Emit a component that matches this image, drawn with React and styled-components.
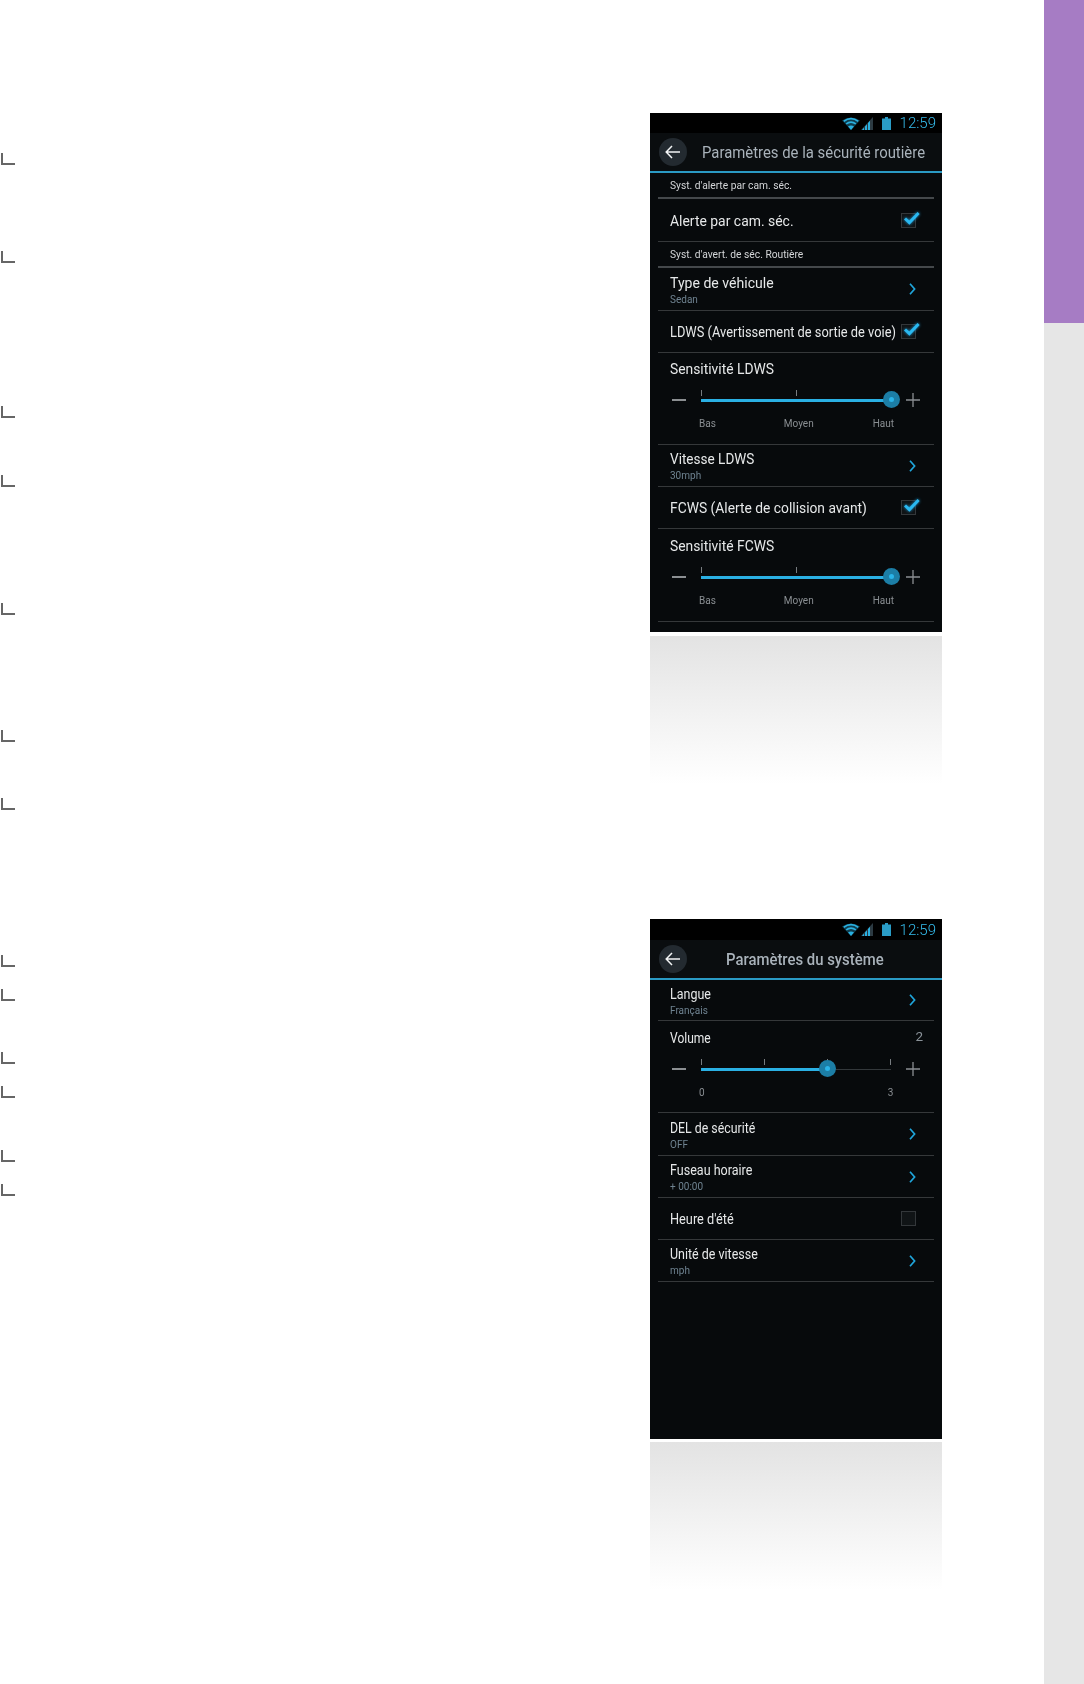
import React from "react";
import styled, { createGlobalStyle } from "styled-components";

const GlobalStyle = createGlobalStyle`
  html, body {
    margin: 0;
    padding: 0;
    background: #fff;
  }
  body {
    font-family: Roboto, "Liberation Sans", sans-serif;
  }
`;

const WifiIcon = () => (
  <svg width="18" height="13" viewBox="0 0 18 13">
    <path d="M9 13 L0 3.6 Q9 -2.4 18 3.6 Z" fill="#2ab0e0" opacity="0.35" />
    <path d="M1.8 4.2 Q9 -0.8 16.2 4.2" stroke="#2ab0e0" strokeWidth="1.7" fill="none" />
    <path d="M4.2 6.9 Q9 3.4 13.8 6.9" stroke="#2ab0e0" strokeWidth="1.7" fill="none" />
    <path d="M9 13 L6 9.4 Q9 7.4 12 9.4 Z" fill="#2ab0e0" />
  </svg>
);

const SignalIcon = () => (
  <svg width="12" height="13" viewBox="0 0 12 13">
    <path d="M0 13 L12 0 V13 Z" fill="#2c3a42" />
    <path d="M1 13 L3 10.6 V13 Z M4 13 V9.4 L6 7.2 V13 Z M7 13 V6 L9 3.8 V13 Z" fill="#2ab0e0" />
  </svg>
);

const BatteryIcon = () => (
  <svg width="9" height="13" viewBox="0 0 9 13">
    <path d="M3 0 H6 V1.5 H9 V13 H0 V1.5 H3 Z" fill="#2a9cc6" />
  </svg>
);

const BackArrow = () => (
  <svg width="16" height="14" viewBox="0 0 16 14">
    <path d="M7 1 L1.2 7 L7 13 M1.2 7 H15" stroke="#f2f4f5" strokeWidth="1.5" fill="none" />
  </svg>
);

const ChevronIcon = () => (
  <svg width="7" height="12" viewBox="0 0 7 12">
    <path d="M1 0.8 L5.6 6 L1 11.2" stroke="#1fa6dc" strokeWidth="1.7" fill="none" />
  </svg>
);

const CheckIcon = () => (
  <CheckMark width="19" height="15" viewBox="0 0 19 15">
    <path d="M3 7.5 L7.4 11.6 L16.6 2" stroke="#2ab8f0" strokeWidth="3" fill="none" />
  </CheckMark>
);

const Page = styled.div`
  display: flex;
  width: 1084px;
  min-height: 1684px;
`;

const Main = styled.main`
  flex: 1;
  display: flex;
  flex-direction: column;
  padding: 113px 102px 0 0;
  gap: 109px;
`;

const Sidebar = styled.aside`
  width: 40px;
  background: #e6e6e6;
`;

const SidebarTab = styled.div`
  height: 323px;
  background: #a67cc4;
`;

const Section = styled.section`
  display: flex;
  justify-content: space-between;
  align-items: flex-start;
`;

const Marks = styled.div`
  display: flex;
  flex-direction: column;
  align-items: flex-start;
  padding-left: 1px;
`;

const Mark = styled.span`
  box-sizing: border-box;
  width: 14px;
  height: 12px;
  margin-top: ${(p) => p.$top}px;
  border-left: 2.5px solid #666;
  border-bottom: 2px solid #666;
`;

const PhoneColumn = styled.div`
  width: 292px;
  display: flex;
  flex-direction: column;
  gap: ${(p) => p.$gap}px;
`;

const Phone = styled.div`
  height: ${(p) => p.$h}px;
  background: #070a0c;
  filter: blur(0.35px);
`;

const Fade = styled.div`
  height: 148px;
  background: linear-gradient(#e3e3e3, #ffffff);
`;

const StatusBar = styled.div`
  height: ${(p) => p.$h}px;
  background: #000;
  display: flex;
  align-items: center;
  justify-content: flex-end;
  padding-right: 6px;
`;

const StatusIcons = styled.div`
  display: flex;
  align-items: center;
  gap: 1px;
  margin-right: 9px;
`;

const BatterySlot = styled.span`
  display: flex;
  margin-left: 8px;
`;

const Clock = styled.span`
  font-size: 15px;
  font-weight: 300;
  color: #35bcec;
`;

const Header = styled.header`
  box-sizing: border-box;
  height: ${(p) => p.$h}px;
  display: flex;
  align-items: center;
  padding-left: 9px;
  border-bottom: 2px solid #2a9ac4;
  background: #0a0d0f;
`;

const BackButton = styled.div`
  flex-shrink: 0;
  width: 28px;
  height: 28px;
  border-radius: 50%;
  background: #232a30;
  display: flex;
  align-items: center;
  justify-content: center;
`;

const Title = styled.h1`
  margin: 0 0 0 ${(p) => p.$left}px;
  font-size: 16px;
  font-weight: ${(p) => p.$weight};
  color: #a9b2ba;
  white-space: nowrap;
  transform: scaleX(0.93);
  transform-origin: left center;
`;

const List = styled.div`
  margin: 0 8px;
`;

const Row = styled.div`
  box-sizing: border-box;
  height: ${(p) => p.$h}px;
  display: flex;
  align-items: center;
  justify-content: space-between;
  padding: 0 18px 0 12px;
  border-bottom: ${(p) => (p.$heading ? "2px solid #44484b" : "1.5px solid #35383a")};
`;

const RowText = styled.div`
  display: flex;
  flex-direction: column;
`;

const RowTitle = styled.span`
  min-width: 0;
  padding-top: 2px;
  font-size: 14.5px;
  line-height: 17px;
  font-weight: 400;
  color: #e6e8e9;
  white-space: nowrap;
  transform: scaleX(${(p) => p.$scale});
  transform-origin: left center;
`;

const RowSub = styled.span`
  margin-top: 1px;
  font-size: 10px;
  line-height: 13px;
  color: #6f8391;
`;

const Heading = styled.span`
  font-size: 10.25px;
  color: #d4d6d8;
  white-space: nowrap;
`;

const CheckBox = styled.div`
  position: relative;
  flex-shrink: 0;
  box-sizing: border-box;
  width: 15px;
  height: 15px;
  border: 1.5px solid #33373a;
  background: #101416;
`;

const CheckMark = styled.svg`
  position: absolute;
  left: -0.5px;
  top: -3px;
  filter: drop-shadow(0 0 1.5px #1f9cd6);
`;

const SliderRow = styled.div`
  box-sizing: border-box;
  height: ${(p) => p.$h}px;
  padding: ${(p) => p.$top}px 0 0 12px;
  border-bottom: 1.5px solid #35383a;
`;

const SliderHead = styled.div`
  display: flex;
  justify-content: space-between;
  padding-right: 11px;
`;

const VolumeValue = styled.span`
  font-size: 13.5px;
  line-height: 17px;
  color: #8a9299;
`;

const SliderLine = styled.div`
  display: flex;
  align-items: center;
  height: 20px;
  margin-top: 12px;
`;

const Minus = styled.span`
  width: 14px;
  height: 1.5px;
  margin: 0 15px 0 2px;
  background: #8b8f92;
`;

const Plus = styled.svg`
  margin-left: 15px;
`;

const Track = styled.div`
  position: relative;
  width: 190px;
  height: 1px;
  background: #33383b;
`;

const TrackFill = styled.div`
  position: absolute;
  left: 0;
  top: -1px;
  height: 3px;
  background: #2ab0e4;
`;

const Tick = styled.span`
  position: absolute;
  top: -10px;
  width: 1px;
  height: 6px;
  background: #777c80;
`;

const Thumb = styled.span`
  position: absolute;
  top: -8.5px;
  width: 17px;
  height: 17px;
  margin-left: -8.5px;
  border-radius: 50%;
  background: #1c7ea6;
  display: flex;
  align-items: center;
  justify-content: center;
  &::after {
    content: "";
    width: 5px;
    height: 5px;
    border-radius: 50%;
    background: #2ab4e8;
  }
`;

const ScaleLabels = styled.div`
  display: flex;
  margin: 8px 0 0 29px;
  font-size: 10px;
  line-height: 12px;
  color: #8a8f93;
`;

const ScaleLabel = styled.span`
  margin-left: ${(p) => p.$gap}px;
`;

const Slider = ({ title, titleScale, value, ticks, labels, height, top, side }) => (
  <SliderRow $h={height} $top={top}>
    <SliderHead>
      <RowTitle $scale={titleScale}>{title}</RowTitle>
      {side && <VolumeValue>{side}</VolumeValue>}
    </SliderHead>
    <SliderLine>
      <Minus />
      <Track>
        <TrackFill style={{ width: `${value}%` }} />
        {ticks.map((t) => (
          <Tick key={t} style={{ left: `${t}%` }} />
        ))}
        <Thumb style={{ left: `${value}%` }} />
      </Track>
      <Plus width="14" height="14" viewBox="0 0 14 14">
        <path d="M7 0 V14 M0 7 H14" stroke="#8b8f92" strokeWidth="1.3" />
      </Plus>
    </SliderLine>
    <ScaleLabels>
      {labels.map((l) => (
        <ScaleLabel key={l.text} $gap={l.gap}>{l.text}</ScaleLabel>
      ))}
    </ScaleLabels>
  </SliderRow>
);

const NavRow = ({ title, sub, height, scale }) => (
  <Row $h={height}>
    <RowText>
      <RowTitle $scale={scale}>{title}</RowTitle>
      <RowSub>{sub}</RowSub>
    </RowText>
    <ChevronIcon />
  </Row>
);

const Status = ({ height }) => (
  <StatusBar $h={height}>
    <StatusIcons>
      <WifiIcon />
      <SignalIcon />
      <BatterySlot>
        <BatteryIcon />
      </BatterySlot>
    </StatusIcons>
    <Clock>12:59</Clock>
  </StatusBar>
);

const safetyLabels = [
  { text: "Bas", gap: 0 },
  { text: "Moyen", gap: 68 },
  { text: "Haut", gap: 59 },
];

export default function App() {
  return (
    <Page>
      <GlobalStyle />
      <Main>
        <Section>
          <Marks>
            {[40, 86, 143, 57, 116, 115, 56].map((top) => (
              <Mark key={top} $top={top} />
            ))}
          </Marks>
          <PhoneColumn $gap={4}>
            <Phone $h={519}>
              <Status height={20} />
              <Header $h={40}>
                <BackButton>
                  <BackArrow />
                </BackButton>
                <Title $left={15} $weight={400}>Paramètres de la sécurité routière</Title>
              </Header>
              <List>
                <Row $h={26} $heading>
                  <Heading>Syst. d'alerte par cam. séc.</Heading>
                </Row>
                <Row $h={43}>
                  <RowTitle $scale={0.96}>Alerte par cam. séc.</RowTitle>
                  <CheckBox>
                    <CheckIcon />
                  </CheckBox>
                </Row>
                <Row $h={26} $heading>
                  <Heading>Syst. d'avert. de séc. Routière</Heading>
                </Row>
                <NavRow height={43} title="Type de véhicule" sub="Sedan" scale={0.97} />
                <Row $h={42}>
                  <RowTitle $scale={0.886}>LDWS (Avertissement de sortie de voie)</RowTitle>
                  <CheckBox>
                    <CheckIcon />
                  </CheckBox>
                </Row>
                <Slider
                  height={92}
                  top={6}
                  title="Sensitivité LDWS"
                  titleScale={0.955}
                  value={100}
                  ticks={[0, 50]}
                  labels={safetyLabels}
                />
                <NavRow height={42} title="Vitesse LDWS" sub="30mph" scale={0.935} />
                <Row $h={42}>
                  <RowTitle $scale={0.953}>FCWS (Alerte de collision avant)</RowTitle>
                  <CheckBox>
                    <CheckIcon />
                  </CheckBox>
                </Row>
                <Slider
                  height={93}
                  top={7}
                  title="Sensitivité FCWS"
                  titleScale={0.955}
                  value={100}
                  ticks={[0, 50]}
                  labels={safetyLabels}
                />
              </List>
            </Phone>
            <Fade />
          </PhoneColumn>
        </Section>
        <Section>
          <Marks>
            {[36, 22, 51, 22, 52, 22].map((top, i) => (
              <Mark key={i} $top={top} />
            ))}
          </Marks>
          <PhoneColumn $gap={3}>
            <Phone $h={520}>
              <Status height={21} />
              <Header $h={40}>
                <BackButton>
                  <BackArrow />
                </BackButton>
                <Title $left={39} $weight={500}>Paramètres du système</Title>
              </Header>
              <List>
                <NavRow height={41} title="Langue" sub="Français" scale={0.86} />
                <Slider
                  height={92}
                  top={7}
                  title="Volume"
                  titleScale={0.83}
                  side="2"
                  value={66.5}
                  ticks={[0, 33, 66.5, 99.5]}
                  labels={[
                    { text: "0", gap: 0 },
                    { text: "3", gap: 183 },
                  ]}
                />
                <NavRow height={43} title="DEL de sécurité" sub="OFF" scale={0.85} />
                <NavRow height={42} title="Fuseau horaire" sub="+ 00:00" scale={0.865} />
                <Row $h={42}>
                  <RowTitle $scale={0.88}>Heure d'été</RowTitle>
                  <CheckBox />
                </Row>
                <NavRow height={42} title="Unité de vitesse" sub="mph" scale={0.86} />
              </List>
            </Phone>
            <Fade />
          </PhoneColumn>
        </Section>
      </Main>
      <Sidebar>
        <SidebarTab />
      </Sidebar>
    </Page>
  );
}
